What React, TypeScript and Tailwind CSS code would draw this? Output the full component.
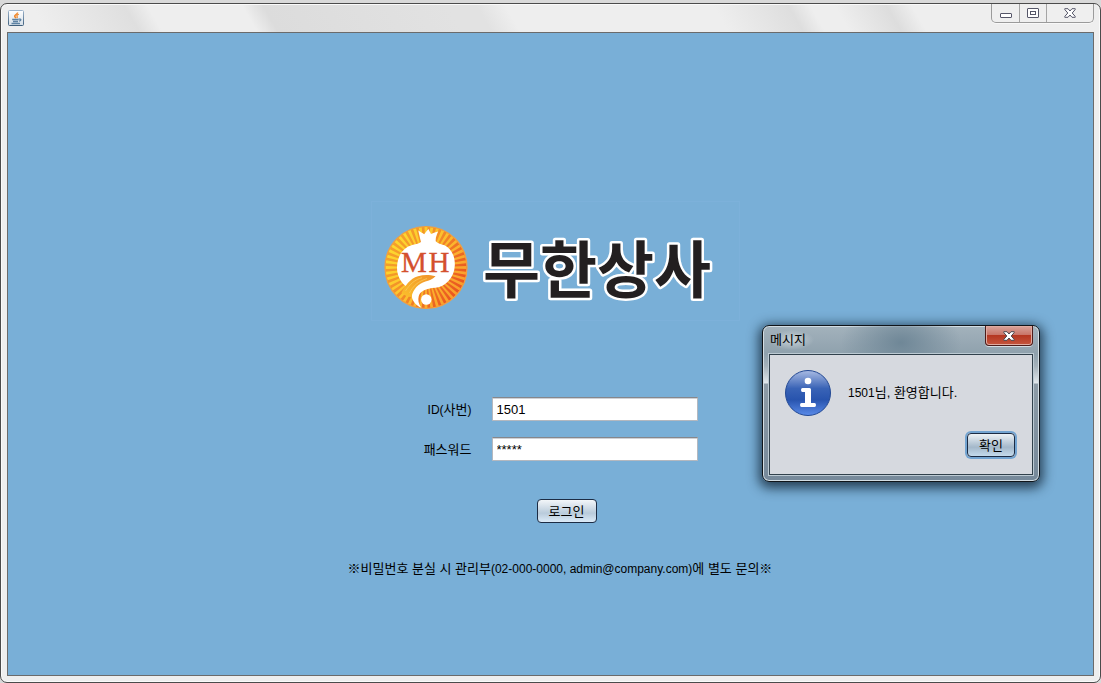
import { useState } from "react";

const RAYS = Array.from({ length: 44 }, (_, i) => (i * 360) / 44);

function JavaIcon() {
  return (
    <svg width="16" height="16" viewBox="0 0 16 16" aria-hidden="true">
      <defs>
        <linearGradient id="javaBg" x1="0" y1="0" x2="0" y2="1">
          <stop offset="0" stopColor="#ffffff" />
          <stop offset="1" stopColor="#d5dfe8" />
        </linearGradient>
        <linearGradient id="javaEdge" x1="0" y1="0" x2="0" y2="1">
          <stop offset="0" stopColor="#9db4cc" />
          <stop offset="1" stopColor="#3f5f7c" />
        </linearGradient>
      </defs>
      <rect x="0.5" y="0.5" width="15" height="15" rx="1" fill="url(#javaBg)" stroke="url(#javaEdge)" />
      <path d="M9.5 2.5C9.8 4.2 6.3 4.8 6.7 6.3C6.9 7 7.7 7.5 7.9 8.3" fill="none" stroke="#f08322" strokeWidth="1.5" />
      <path d="M10.8 4.3C8.8 5 8.3 5.8 9.2 6.6C9.6 7.1 9.2 7.8 8.8 8.2" fill="none" stroke="#f08322" strokeWidth="1.1" />
      <path d="M4.2 9.5H10.6M5 11.5H10M3.5 13.5H12M10.8 9.2C13.4 8.5 13.7 10.6 10.9 11.2" fill="none" stroke="#5d82a3" strokeWidth="1.3" />
    </svg>
  );
}

function CloseGlyph({ className, stroke, fill }: { className: string; stroke: string; fill: string }) {
  return (
    <svg className={className} viewBox="0 0 12 10" aria-hidden="true">
      <path
        d="M0.8 0.7H4L6 3L8 0.7H11.2V1.6L8.2 5L11.2 8.4V9.3H8L6 7L4 9.3H0.8V8.4L3.8 5L0.8 1.6Z"
        fill={fill}
        stroke={stroke}
        strokeLinejoin="round"
      />
    </svg>
  );
}

function TitleBar() {
  return (
    <header className="flex h-7 shrink-0 items-start justify-between pl-px">
      <span className="mt-1.5">
        <JavaIcon />
      </span>
      <div className="flex h-[19px] rounded-b-[5px] border border-t-0 border-[#9b9b9b] bg-[#efefef] shadow-[0_1px_0_#f8f8f8]">
        <button type="button" aria-label="최소화" className="flex w-7 items-center justify-center border-r border-[#a5a5a5]">
          <svg width="12" height="5" viewBox="0 0 12 5" className="mt-1" aria-hidden="true">
            <rect x="0.5" y="0.5" width="11" height="4" rx="0.5" fill="#fff" stroke="#555668" />
          </svg>
        </button>
        <button type="button" aria-label="최대화" className="flex w-[27px] items-center justify-center border-r border-[#a5a5a5]">
          <svg width="12" height="10" viewBox="0 0 12 10" aria-hidden="true">
            <rect x="0.5" y="0.5" width="11" height="9" rx="0.5" fill="#fff" stroke="#555668" />
            <rect x="3.5" y="3.5" width="5" height="3" fill="#fff" stroke="#555668" />
          </svg>
        </button>
        <button type="button" aria-label="닫기" className="flex w-[46px] items-center justify-center">
          <CloseGlyph className="h-2.5 w-3" stroke="#555668" fill="#ffffff" />
        </button>
      </div>
    </header>
  );
}

function Logo() {
  return (
    <svg width="369" height="120" viewBox="0 0 369 120" role="img" aria-label="무한상사">
      <defs>
        <linearGradient id="sun" gradientUnits="userSpaceOnUse" x1="14" y1="45" x2="92" y2="92">
          <stop offset="0" stopColor="#f5a52a" />
          <stop offset="0.45" stopColor="#f28c28" />
          <stop offset="1" stopColor="#e94e1f" />
        </linearGradient>
        <linearGradient id="ray" gradientUnits="userSpaceOnUse" x1="14" y1="45" x2="92" y2="92">
          <stop offset="0" stopColor="#fddc2e" />
          <stop offset="0.5" stopColor="#fcbf2e" />
          <stop offset="1" stopColor="#f99a2b" />
        </linearGradient>
        <linearGradient id="leaf" x1="0" y1="1" x2="1" y2="0">
          <stop offset="0" stopColor="#fbc02c" />
          <stop offset="1" stopColor="#f0912a" />
        </linearGradient>
      </defs>
      <rect x="0.5" y="0.5" width="368" height="119" fill="none" stroke="#80b3dc" strokeOpacity="0.6" />
      <circle cx="55" cy="66.5" r="41" fill="url(#sun)" />
      <g fill="url(#ray)">
        {RAYS.map((angle) => {
          const a = (angle * Math.PI) / 180;
          const at = (r: number, t: number) => `${55 + r * Math.cos(t)} ${66.5 + r * Math.sin(t)}`;
          return <path key={angle} d={`M${at(16, a - 0.036)}L${at(40.5, a - 0.036)}L${at(40.5, a + 0.036)}L${at(16, a + 0.036)}Z`} />;
        })}
      </g>
      <circle cx="55" cy="66.5" r="41" fill="none" stroke="#f2a040" strokeWidth="1.2" />
      <path
        d="M50 41C49 37 48 33 47.3 29.5C49.5 31 51.4 32 53.2 33.2C54.6 31.3 56 29.5 57.4 28C58.5 30 59.2 31.5 60 33C62.5 31.8 65 31 67.2 30.6C65.4 34 64.5 37 64.7 40.3C67 43 70 43.2 73.4 44.2C80 47 84.2 55 83.8 64.5C83.4 76 75 85.5 64.5 86.8C54.5 87.5 48.8 90.5 47.6 95.5C46.8 100 48 104 50.5 106.8C43.5 104 40.5 98.5 40.7 93C41 88.5 43.5 85.5 46 82.5L41 88.5C31.5 85 25.8 76 26 66.5C26.2 55 32 46.8 40.5 44.2C44 43.2 47.4 43 50 41Z"
        fill="#fff"
      />
      <path d="M30.5 92C34 85 39 77.5 47 75.3C53 73.6 58 73.8 64.6 75.2C61.5 78.4 58 79.3 54.4 80.6C47.5 83 42 88 40.6 96C37 96 34 94.5 30.5 92Z" fill="url(#leaf)" />
      <path d="M34.5 90C39 83 44 78.5 51 76.7M38.5 92C42 85 47 80.4 56 77.6" fill="none" stroke="#f7c95c" strokeWidth="0.8" />
      <circle cx="55.3" cy="98.5" r="5.2" fill="#fff" />
      <g textAnchor="middle" fontSize="29" className="font-['Liberation_Serif',serif]" fill="#d4502e" stroke="#d4502e" strokeWidth="0.3">
        <text x="43" y="71">M</text>
        <text x="68" y="71">H</text>
      </g>
      <text
        x="112"
        y="92"
        fontSize="62"
        strokeWidth="5"
        strokeLinejoin="round"
        paintOrder="stroke"
        fill="#231f20"
        stroke="#ffffff"
        className="font-['Noto_Sans_CJK_KR',sans-serif] font-bold"
      >
        무한상사
      </text>
    </svg>
  );
}

const fieldClass =
  "h-6 w-[206px] border border-[#b4b8bf] border-t-[#85878c] bg-white px-1 shadow-[inset_0_1px_0_#cfd1d6] outline-none";

function LoginForm() {
  const [id, setId] = useState("1501");
  const [password, setPassword] = useState("*****");

  return (
    <form className="flex flex-col" onSubmit={(e) => e.preventDefault()}>
      <div className="grid grid-cols-[48px_206px] items-center gap-x-5 gap-y-4 pl-[76px]">
        <label htmlFor="userId" className="pt-0.5 text-right whitespace-nowrap">
          <span className="text-xs">ID(</span>사번<span className="text-xs">)</span>
        </label>
        <input id="userId" className={fieldClass} value={id} onChange={(e) => setId(e.target.value)} />
        <label htmlFor="userPassword" className="pt-0.5 text-right whitespace-nowrap">
          패스워드
        </label>
        <input
          id="userPassword"
          autoComplete="off"
          className={fieldClass}
          value={password}
          onChange={(e) => setPassword("*".repeat(e.target.value.length))}
        />
      </div>
      <button
        type="submit"
        className="mt-[38px] ml-[189px] h-6 w-[60px] rounded-[4px] border border-[#1c2c44] bg-linear-to-b from-[#f3f6f9] via-[#b9cbdb] via-60% to-[#dcebf8] leading-none"
      >
        로그인
      </button>
    </form>
  );
}

function MessageDialog() {
  return (
    <div
      role="dialog"
      aria-labelledby="dialogTitle"
      className="absolute top-[321px] right-[60px] flex w-[278px] flex-col rounded-[7px] border border-[#10151a] bg-[linear-gradient(180deg,#a3b2bc_0px,#8fa1ad_28px,#a4b1ba_40px,#e1e7eb_57px,#8d9ba6_58px,#76899a_100%)] px-1.5 pb-1.5 shadow-[0_3px_12px_3px_rgba(10,25,40,0.75),inset_0_0_0_1px_#d3dde3]"
    >
      <div className="flex h-7 items-start justify-between bg-[radial-gradient(ellipse_60px_40px_at_50%_60%,#6f8797,transparent)] pl-px">
        <h1 id="dialogTitle" className="mt-1 bg-[radial-gradient(closest-side,#c8d2d8,transparent)] pr-2 leading-5">
          메시지
        </h1>
        <button
          type="button"
          aria-label="닫기"
          className="flex h-5 w-12 items-center justify-center rounded-b-[4px] border border-t-0 border-[#4d1c1a] bg-[linear-gradient(180deg,#d9a49b_0%,#c9766a_45%,#b53722_50%,#c5563e_100%)] shadow-[inset_0_0_0_1px_#e0aba1,0_1px_0_#d3dde3]"
        >
          <CloseGlyph className="h-2.5 w-3" stroke="#4a4950" fill="#ffffff" />
        </button>
      </div>
      <div className="flex flex-col border border-[#31414c] bg-[#d6d9df] pt-3.5 pr-[17px] pb-[17px] pl-3.5 shadow-[0_0_0_1px_#bccad3]">
        <div className="flex items-center gap-4">
          <svg width="48" height="48" viewBox="0 0 48 48" aria-hidden="true">
            <defs>
              <linearGradient id="info" x1="0" y1="0" x2="0" y2="1">
                <stop offset="0" stopColor="#a9bbe3" />
                <stop offset="0.4" stopColor="#3963b6" />
                <stop offset="0.65" stopColor="#2854ae" />
                <stop offset="1" stopColor="#5a8be9" />
              </linearGradient>
            </defs>
            <circle cx="24" cy="24" r="22.5" fill="url(#info)" stroke="#234994" />
            <circle cx="24" cy="12" r="3.3" fill="#fff" />
            <path d="M18.5 19H25.5Q27 19 27 20.5V34H30.5Q32 34 32 36T30.5 38H17.5Q16 38 16 36T17.5 34H21V23H18.5Q17 23 17 21T18.5 19Z" fill="#fff" />
          </svg>
          <p>
            <span className="text-xs">1501</span>님, 환영합니다.
          </p>
        </div>
        <button
          type="button"
          autoFocus
          className="mt-4 h-6 w-12 self-end rounded-[4px] border border-[#1c2c44] bg-linear-to-b from-[#eef3f6] via-[#a4b8ca] via-60% to-[#c4dbed] leading-none shadow-[0_0_0_2px_#73a4d1] outline-none"
        >
          확인
        </button>
      </div>
    </div>
  );
}

export default function App() {
  return (
    <div className="flex h-screen min-h-[600px] flex-col bg-[#d9d9d9] pt-[3px] font-['Liberation_Sans','Noto_Sans_CJK_KR',sans-serif] text-[13px] leading-5 text-black">
      <div className="relative flex grow flex-col rounded-[7px] border border-[#4b4b4b] bg-[#eeeeee] bg-[linear-gradient(60deg,transparent_40px,#dfdfdf_120px,transparent_140px,transparent_222px,#dcdcdc_240px,#e2e2e2_400px,#e2e2e2_425px,transparent_450px,transparent_630px,#dedede_695px,transparent_714px,transparent_735px,#dddddd_780px,transparent_802px)] bg-[length:100%_28px] bg-no-repeat px-1.5 pb-1.5 shadow-[inset_0_0_0_1px_#fafafa]">
        <TitleBar />
        <main className="flex grow flex-col items-center border border-[#6b6b6b] bg-[#79afd7] pt-[168px] pl-4">
          <div className="flex w-[422px] flex-col">
            <div className="pl-[23px]">
              <Logo />
            </div>
            <div className="mt-[76px]">
              <LoginForm />
            </div>
            <p className="mt-9 text-center whitespace-nowrap">
              ※비밀번호 분실 시 관리부<span className="text-xs">(02-000-0000, admin@company.com)</span>에 별도 문의※
            </p>
          </div>
        </main>
        <MessageDialog />
      </div>
    </div>
  );
}
